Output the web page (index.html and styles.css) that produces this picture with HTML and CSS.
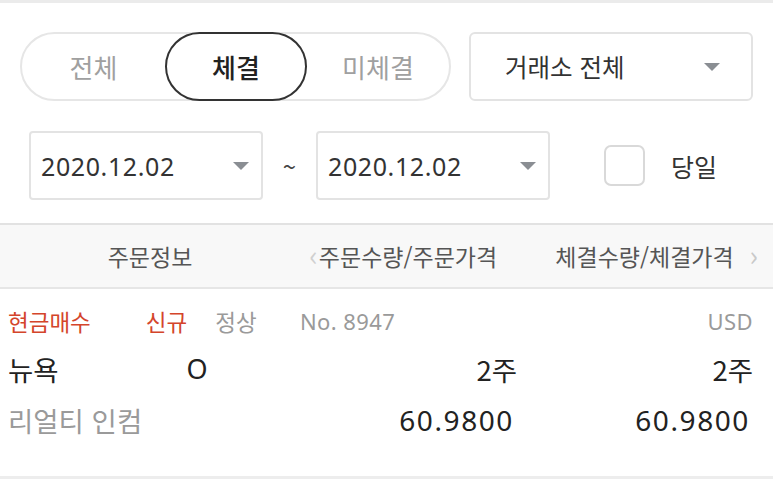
FILE: index.html
```html
<!DOCTYPE html>
<html lang="ko">
<head>
<meta charset="UTF-8">
<meta name="viewport" content="width=device-width, initial-scale=1.0">
<title>체결 내역</title>
<link rel="stylesheet" href="styles.css">
</head>
<body>
    <div class="page">
        <div class="filter-row">
            <div class="seg">
                <span class="seg-item">전체</span>
                <span class="seg-item active">체결</span>
                <span class="seg-item">미체결</span>
            </div>
            <div class="select market">
                <span>거래소 전체</span>
                <i class="caret"></i>
            </div>
        </div>

        <div class="date-row">
            <div class="select date">
                <span class="num">2020.12.02</span>
                <i class="caret"></i>
            </div>
            <span class="tilde">~</span>
            <div class="select date">
                <span class="num">2020.12.02</span>
                <i class="caret"></i>
            </div>
            <label class="today">
                <span class="check"></span>
                <span>당일</span>
            </label>
        </div>

        <div class="list-head">
            <span>주문정보</span>
            <span class="mid"><i class="arr-left">&lsaquo;</i>주문수량/주문가격</span>
            <span>체결수량/체결가격</span>
            <i class="arr-right">&rsaquo;</i>
        </div>

        <div class="order">
            <div class="line small">
                <div class="c1">
                    <span class="red">현금매수</span>
                    <span class="red new">신규</span>
                    <span class="gray">정상</span>
                </div>
                <div class="c2 gray num">No. 8947</div>
                <div class="c3 gray num">USD</div>
            </div>
            <div class="line">
                <div class="c1">
                    <span>뉴욕</span>
                    <span class="oflag num">O</span>
                </div>
                <div class="c2 right">2주</div>
                <div class="c3">2주</div>
            </div>
            <div class="line">
                <div class="c1 gray">리얼티 인컴</div>
                <div class="c2 right num price">60.9800</div>
                <div class="c3 num price">60.9800</div>
            </div>
        </div>
    </div>
</body>
</html>
```

FILE: styles.css
```css
* {
    box-sizing: border-box;
}
body {
    margin: 0;
    background: #fff;
    font-family: "Noto Sans CJK KR", "Noto Sans", sans-serif;
    color: #333;
}
.num {
    font-family: "Noto Sans", "Noto Sans CJK KR", sans-serif;
}
.page {
    width: 773px;
    height: 479px;
    border-top: 3px solid #ebebeb;
    border-bottom: 3px solid #ededed;
    overflow: hidden;
}

/* filter row */
.filter-row {
    display: flex;
    gap: 18px;
    padding: 29px 20px 0 20px;
}
.seg {
    display: grid;
    grid-template-columns: 143px 142px 1fr;
    width: 431px;
    height: 69px;
    border: 2px solid #e6e6e6;
    border-radius: 35px;
}
.seg-item {
    display: flex;
    justify-content: center;
    align-items: center;
    font-size: 26px;
    color: #a0a0a0;
    margin: -2px 0;
}
.seg-item.active {
    color: #222;
    font-weight: 500;
    border: 2px solid #333;
    border-radius: 35px;
}
.select {
    display: flex;
    align-items: center;
    justify-content: space-between;
    height: 69px;
    border: 2px solid #e3e3e3;
    border-radius: 6px;
    background: #fff;
}
.market {
    width: 284px;
    padding: 0 31px 0 34px;
    font-size: 24.5px;
    color: #333;
}
.caret {
    width: 0;
    height: 0;
    border-left: 8px solid transparent;
    border-right: 8px solid transparent;
    border-top: 8px solid #8a8e93;
}

/* date row */
.date-row {
    display: flex;
    align-items: center;
    padding: 30px 0 0 29px;
}
.date {
    width: 234px;
    padding: 0 12px 0 10px;
    border-radius: 4px;
    font-size: 25px;
    color: #333;
}
.date .num {
    letter-spacing: 0.6px;
}
.tilde {
    width: 53px;
    text-align: center;
    font-size: 24px;
    color: #444;
}
.today {
    display: flex;
    align-items: center;
    gap: 26px;
    margin-left: 54px;
    font-size: 25px;
    color: #333;
}
.check {
    width: 41px;
    height: 41px;
    border: 2px solid #d9d9d9;
    border-radius: 7px;
}

/* list header */
.list-head {
    position: relative;
    display: grid;
    grid-template-columns: 300px 216px 1fr;
    justify-items: center;
    align-items: center;
    margin-top: 23px;
    height: 66px;
    background: #f8f8f8;
    border-top: 2px solid #e2e2e2;
    border-bottom: 2px solid #e6e6e6;
    font-size: 23px;
    color: #555;
}
.list-head .mid {
    position: relative;
}
.arr-left,
.arr-right {
    position: absolute;
    top: 50%;
    transform: translateY(-54%);
    font-style: normal;
    font-size: 28px;
    color: #c9c9c9;
}
.arr-left {
    right: 100%;
    margin-right: 1px;
    color: #d0d0d0;
}
.arr-right {
    right: 15px;
}

/* order */
.order {
    padding: 10px 20px 0 8px;
}
.line {
    display: grid;
    grid-template-columns: 292px 217px 1fr;
    align-items: center;
    height: 51px;
    font-size: 27.5px;
    color: #222;
}
.line.small {
    height: 44px;
    font-size: 22.5px;
}
.c1 {
    display: flex;
    align-items: center;
}
.c3,
.right {
    text-align: right;
}
.red {
    color: #d4452b;
}
.new {
    margin-left: 55px;
}
.gray {
    color: #9a9a9a;
}
.small .c1 .gray {
    margin-left: 28px;
}
.small .num {
    font-size: 22px;
    letter-spacing: 0.4px;
}
.oflag {
    margin-left: 128px;
    font-size: 27px;
}
.price {
    font-size: 28px;
    letter-spacing: 1.6px;
    padding-right: 3px;
}
```
